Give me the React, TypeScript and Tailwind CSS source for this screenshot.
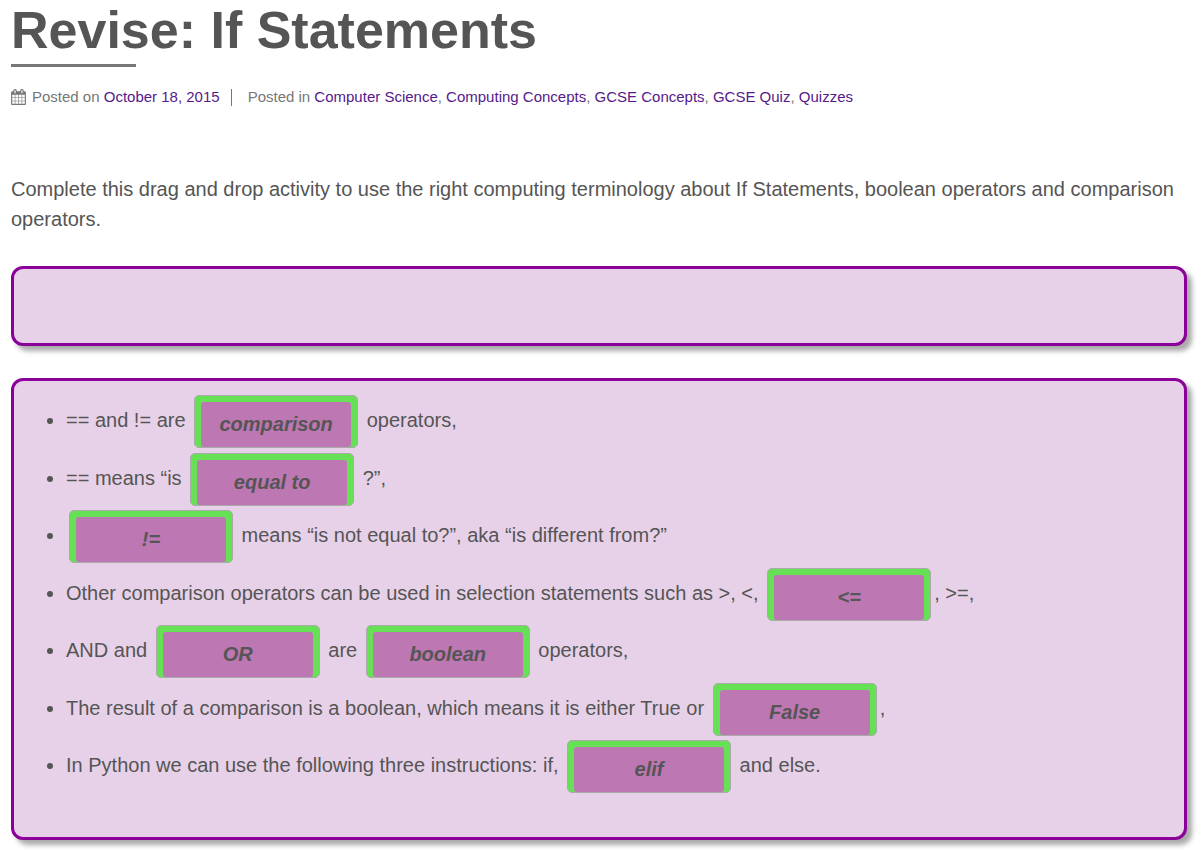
import type { ReactNode } from 'react';

const categories = [
  'Computer Science',
  'Computing Concepts',
  'GCSE Concepts',
  'GCSE Quiz',
  'Quizzes',
];

function CalendarIcon() {
  return (
    <svg viewBox="0 0 1664 1792" className="h-4 w-[15px] shrink-0" fill="currentColor" aria-hidden="true">
      <path d="M128 1664h288v-288H128v288zm352 0h320v-288H480v288zm-352-352h288V992H128v320zm352 0h320V992H480v320zM128 928h288V640H128v288zm736 736h320v-288H864v288zM480 928h320V640H480v288zm768 736h288v-288h-288v288zm-384-352h320V992H864v320zM512 448V160q0-13-9.500-22.500T480 128h-64q-13 0-22.500 9.500T384 160v288q0 13 9.500 22.500T416 480h64q13 0 22.500-9.500T512 448zm736 864h288V992h-288v320zM864 928h320V640H864v288zm384 0h288V640h-288v288zm32-480V160q0-13-9.500-22.500T1248 128h-64q-13 0-22.500 9.500T1152 160v288q0 13 9.500 22.500t22.500 9.500h64q13 0 22.500-9.500t9.500-22.500zm384-64v1280q0 52-38 90t-90 38H128q-52 0-90-38t-38-90V384q0-52 38-90t90-38h128v-96q0-66 47-113T416 0h64q66 0 113 47t47 113v96h384v-96q0-66 47-113t113-47h64q66 0 113 47t47 113v96h128q52 0 90 38t38 90z" />
    </svg>
  );
}

function MetaLink({ children }: { children: ReactNode }) {
  return (
    <a href="#" className="text-[#551a8b] no-underline hover:underline">
      {children}
    </a>
  );
}

function Slot({ children }: { children: ReactNode }) {
  return (
    <span className="mx-[3px] inline-block h-[53px] w-[164px] rounded-[5px] border border-[#aaa] bg-[#66e055] px-1.5 pt-1.5 align-middle">
      <span
        draggable
        className="block h-[45px] cursor-move rounded-[3px] bg-[#bd77b3] text-center font-bold leading-[45px] italic"
      >
        {children}
      </span>
    </span>
  );
}

const panel =
  'rounded-xl border-3 border-[#8b0099] bg-[#e7d1e8] shadow-[5px_5px_5px_#aaaaaa]';

export default function App() {
  return (
    <main className="pr-[15px] pb-3 pl-[11px] font-['Liberation_Sans',Arial,sans-serif] text-[#555]">
      <header>
        <h1 className="mb-1 text-[52px] leading-[60px] font-bold">Revise: If Statements</h1>
        <div className="h-[3px] w-[125px] bg-[#777]" />
        <div className="mt-5 flex items-center text-[15px] leading-5 text-[#777]">
          <CalendarIcon />
          <span className="ml-1.5">
            Posted on <MetaLink>October 18, 2015</MetaLink>
          </span>
          <span className="mr-4 ml-[11px] h-[17px] w-px bg-[#777]" />
          <span>
            Posted in{' '}
            {categories.map((name, i) => (
              <span key={name}>
                {i > 0 && ', '}
                <MetaLink>{name}</MetaLink>
              </span>
            ))}
          </span>
        </div>
      </header>

      <p className="mt-[67px] text-[20px] leading-[30px]">
        Complete this drag and drop activity to use the right computing terminology about If
        Statements, boolean operators and comparison operators.
      </p>

      <section aria-label="Answers" className={`mt-8 min-h-20 ${panel}`} />

      <section aria-label="Sentences" className={`mt-8 pt-3.5 pb-[39px] ${panel}`}>
        <ul className="list-disc pl-[52px] text-[20px] leading-[30px] [&>li]:odd:min-h-[58px] [&>li]:even:min-h-[57px]">
          <li>
            == and != are <Slot>comparison</Slot> operators,
          </li>
          <li>
            == means “is <Slot>equal to</Slot> ?”,
          </li>
          <li>
            <Slot>!=</Slot> means “is not equal to?”, aka “is different from?”
          </li>
          <li>
            Other comparison operators can be used in selection statements such as &gt;, &lt;,{' '}
            <Slot>&lt;=</Slot>, &gt;=,
          </li>
          <li>
            AND and <Slot>OR</Slot> are <Slot>boolean</Slot> operators,
          </li>
          <li>
            The result of a comparison is a boolean, which means it is either True or{' '}
            <Slot>False</Slot>,
          </li>
          <li>
            In Python we can use the following three instructions: if, <Slot>elif</Slot> and else.
          </li>
        </ul>
      </section>
    </main>
  );
}
